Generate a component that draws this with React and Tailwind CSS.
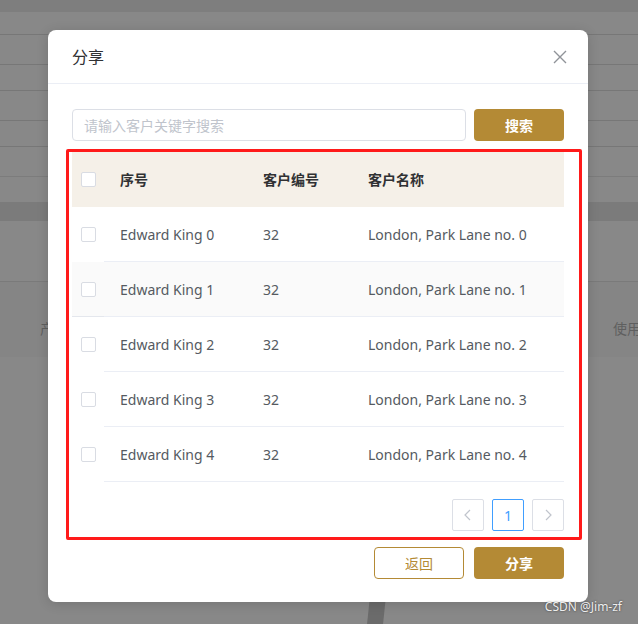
import React from 'react';

const font = { fontFamily: '"Noto Sans", "Noto Sans CJK SC", sans-serif' };

const rows = [0, 1, 2, 3, 4].map((i) => ({
  name: `Edward King ${i}`,
  code: '32',
  address: `London, Park Lane no. ${i}`,
}));

// Checkbox square
const Check = () => (
  <span className="block w-[15px] h-[15px] rounded-[2px] border border-[#d9dce3] bg-white" />
);

// Gray page behind the overlay
const Backdrop = () => (
  <div className="flex flex-col w-full">
    <div className="h-[12px] bg-[#7e7e7e]" />
    <div className="h-[23px] border-b border-[#777]" />
    <div className="h-[30px] border-b border-[#777]" />
    <div className="h-[26px] border-b border-[#777]" />
    <div className="h-[30px] border-b border-[#777]" />
    <div className="h-[26px] border-b border-[#777]" />
    <div className="h-[30px] border-b border-[#7c7c7c]" />
    <div className="h-[25px]" />
    <div className="h-[19px] bg-[#7b7b7b]" />
    <div className="h-[61px] border-b border-[#7a7a7a]" />
    <div className="h-[75px] bg-[#858585] flex items-center justify-between pl-[40px] text-[14px] text-[#5f5f5f] pt-[18px]">
      <span>产</span>
      <span className="-mr-[3px]">使用</span>
    </div>
  </div>
);

const App = () => (
  <div className="relative w-[638px] h-[624px] overflow-hidden bg-[#888888]" style={font}>
    <Backdrop />
    <div className="absolute left-[368px] top-[600px] w-[16px] h-[30px] bg-[#6b6b6b] -skew-x-6" />

    {/* Dialog */}
    <div className="absolute left-[48px] top-[30px] w-[540px] h-[572px] bg-white rounded-[8px] shadow-[0_2px_12px_rgba(0,0,0,0.15)] flex flex-col">
      <div className="h-[54px] shrink-0 flex items-center justify-between pl-[24px] pr-[20px] border-b border-[#ebeef5]">
        <span className="text-[16px] text-[#303133]">分享</span>
        <svg width="16" height="16" viewBox="0 0 16 16" className="text-[#909399]">
          <path d="M2 2 L14 14 M14 2 L2 14" stroke="currentColor" strokeWidth="1.4" fill="none" />
        </svg>
      </div>

      <div className="flex flex-col px-[24px] pt-[25px]">
        <div className="flex gap-[8px]">
          <div className="flex-1 h-[32px] border border-[#dcdfe6] rounded-[4px] flex items-center px-[11px] text-[14px] text-[#c0c4cc]">
            请输入客户关键字搜索
          </div>
          <button className="w-[90px] h-[32px] rounded-[4px] bg-[#b48a35] text-white text-[14px] font-semibold">
            搜索
          </button>
        </div>

        {/* Table */}
        <div className="mt-[11px] flex flex-col text-[14px]">
          <div className="grid grid-cols-[32px_143px_105px_1fr] h-[55px] items-center bg-[#f5f0e8] text-[#303133] font-semibold">
            <div className="flex justify-center"><Check /></div>
            <div className="pl-[16px]">序号</div>
            <div className="pl-[16px]">客户编号</div>
            <div className="pl-[16px]">客户名称</div>
          </div>
          {rows.map((r, i) => (
            <div
              key={i}
              className={`grid grid-cols-[32px_143px_105px_1fr] h-[55px] text-[#555a61] ${i === 1 ? 'bg-[#fafafa]' : 'bg-white'}`}
            >
              <div className={`flex items-center justify-center ${i === 1 ? 'border-b border-[#e4e7ed]' : ''}`}>
                <Check />
              </div>
              <div className="col-span-3 grid grid-cols-[143px_105px_1fr] items-center border-b border-[#ebeef5]">
                <div className="pl-[16px]">{r.name}</div>
                <div className="pl-[16px]">{r.code}</div>
                <div className="pl-[16px]">{r.address}</div>
              </div>
            </div>
          ))}
        </div>

        {/* Pagination */}
        <div className="flex justify-end gap-[8px] mt-[17px]">
          <div className="w-[32px] h-[32px] border border-[#dcdfe6] rounded-[2px] flex items-center justify-center text-[#c0c4cc]">
            <svg width="10" height="12" viewBox="0 0 10 12"><path d="M7 1 L2 6 L7 11" stroke="currentColor" strokeWidth="1.2" fill="none" /></svg>
          </div>
          <div className="w-[32px] h-[32px] border border-[#409eff] rounded-[2px] flex items-center justify-center text-[#409eff] text-[14px]">
            1
          </div>
          <div className="w-[32px] h-[32px] border border-[#dcdfe6] rounded-[2px] flex items-center justify-center text-[#c0c4cc]">
            <svg width="10" height="12" viewBox="0 0 10 12"><path d="M3 1 L8 6 L3 11" stroke="currentColor" strokeWidth="1.2" fill="none" /></svg>
          </div>
        </div>

        {/* Footer */}
        <div className="flex justify-end gap-[10px] mt-[16px]">
          <button className="w-[90px] h-[32px] rounded-[4px] border border-[#b48a35] bg-white text-[#b48a35] text-[14px]">
            返回
          </button>
          <button className="w-[90px] h-[32px] rounded-[4px] bg-[#b48a35] text-white text-[14px] font-semibold">
            分享
          </button>
        </div>
      </div>

      {/* red annotation box */}
      <div className="absolute left-[18px] top-[119px] w-[516px] h-[391px] border-[3px] border-[#ff1a1a] rounded-[2px] pointer-events-none" />
    </div>

    <div className="absolute right-[16px] bottom-[8px] text-[12px] text-[#eeeeee] [text-shadow:0_0_2px_rgba(0,0,0,0.6)]">
      CSDN @Jim-zf
    </div>
  </div>
);

export default App;
